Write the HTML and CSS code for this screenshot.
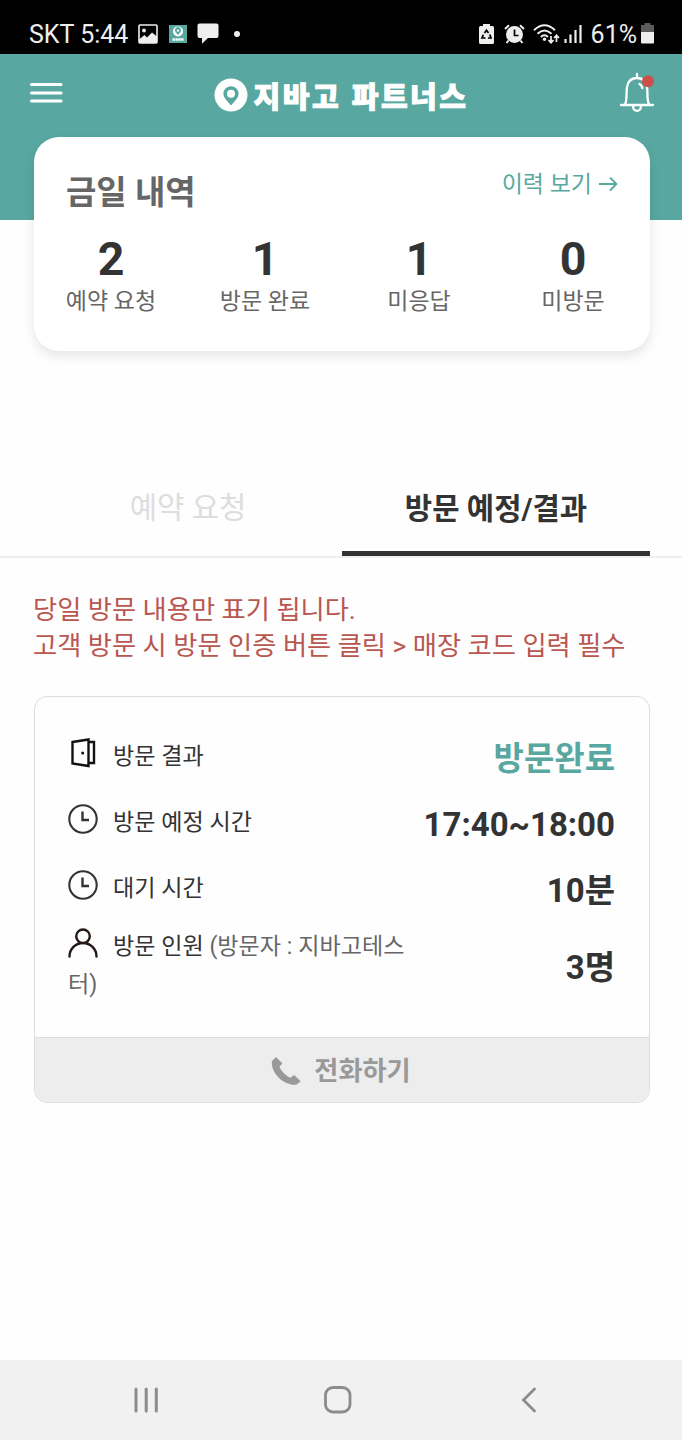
FILE: index.html
```html
<!DOCTYPE html>
<html lang="ko">

<head>
    <meta charset="UTF-8">
    <meta name="viewport" content="width=device-width, initial-scale=1.0">
    <link rel="stylesheet" href="styles.css">
    <title>지바고 파트너스</title>
</head>

<body>
    <div class="status-bar">
        <div class="status-left">
            <span class="status-text">SKT 5:44</span>
            <svg class="status-photo" width="20" height="20" viewBox="0 0 20 20">
                <rect x="1" y="1" width="18" height="18" rx="1" fill="none" stroke="#eee" stroke-width="1.6" />
                <circle cx="6" cy="6.5" r="1.9" fill="#eee" />
                <path d="M1 15.5L6.5 11L9 13.5L14 8.5L19 12.5V19H1z" fill="#eee" />
            </svg>
            <svg class="status-app" width="18" height="18" viewBox="0 0 18 18">
                <rect width="18" height="18" fill="#58a8a1" />
                <circle cx="9" cy="6.4" r="5" fill="#fff" />
                <path d="M9 10L6.7 7.2A3 3 0 1 1 11.3 7.2z" fill="#58a8a1" />
                <circle cx="9" cy="5.6" r="1.2" fill="#fff" />
                <path d="M3.5 14.5H14.5" stroke="#fff" stroke-width="2.5" stroke-dasharray="2.4 0.5" />
            </svg>
            <svg class="status-chat" width="22" height="21" viewBox="0 0 22 21">
                <path d="M2.5 0.5h17a2 2 0 0 1 2 2V13a2 2 0 0 1-2 2H11L5 20.8V15H2.5a2 2 0 0 1-2-2V2.5a2 2 0 0 1 2-2z" fill="#eee" />
            </svg>
            <span class="status-dot"></span>
        </div>
        <div class="status-right">
            <svg class="status-saver" width="15" height="20" viewBox="0 0 15 20">
                <path d="M4 0h7v2h2.5a1.5 1.5 0 0 1 1.5 1.5v15a1.5 1.5 0 0 1-1.5 1.5h-12A1.5 1.5 0 0 1 0 18.5v-15A1.5 1.5 0 0 1 1.5 2H4z" fill="#eee" />
                <path d="M5.5 9L7.5 6.2L9.5 9M10.8 10.5L12 14H9M6.5 14H3L4.3 10.8" fill="none" stroke="#000" stroke-width="1.7" />
            </svg>
            <svg class="status-alarm" width="21" height="20" viewBox="0 0 21 20">
                <circle cx="10.5" cy="10.5" r="8.5" fill="#eee" />
                <path d="M1 5L5 1.2M20 5L16 1.2M4.5 16.5L2.5 19M16.5 16.5L18.5 19" stroke="#eee" stroke-width="2" />
                <path d="M10.5 5.5V11.5H14.5" fill="none" stroke="#000" stroke-width="1.7" />
            </svg>
            <svg class="status-wifi" width="27" height="20" viewBox="0 0 27 20">
                <path d="M1 6.2Q11.5 -3.5 22 6.2M4.5 9.8Q11.5 3 18.5 9.8M7.8 13Q11.5 9.5 15 13" fill="none" stroke="#eee" stroke-width="1.9" />
                <circle cx="11.5" cy="15.3" r="1.7" fill="#eee" />
                <path d="M18 12V18.5M15.5 16L18 18.8L20.5 16M23.5 18V11.5M21 14L23.5 11.2L26 14" fill="none" stroke="#eee" stroke-width="1.7" />
            </svg>
            <svg class="status-signal" width="18" height="20" viewBox="0 0 18 20">
                <path d="M1.5 15V19M6.5 10.5V19M11.5 6V19M16.5 1V19" stroke="#eee" stroke-width="2.2" />
            </svg>
            <span class="status-text">61%</span>
            <svg class="status-battery" width="13" height="21" viewBox="0 0 13 21">
                <path d="M3.5 0h6v2H13V9H0V2h3.5z" fill="#5c5c5c" />
                <path d="M0 9h13v10.5a1 1 0 0 1-1 1H1a1 1 0 0 1-1-1z" fill="#eee" />
            </svg>
        </div>
    </div>

    <header class="header">
        <svg class="menu-icon" width="34" height="22" viewBox="0 0 34 22">
            <path d="M2.5 2.5H32M2.5 11H32M2.5 19H32" stroke="#fff" stroke-width="3" stroke-linecap="round" />
        </svg>
        <div class="logo">
            <svg width="34" height="34" viewBox="0 0 34 34">
                <circle cx="17" cy="17" r="16.5" fill="#fff" />
                <path d="M17 27.5L11.2 20.8A7.6 7.6 0 1 1 22.8 20.8z" fill="#58a8a1" />
                <circle cx="17" cy="15.8" r="4" fill="#fff" />
            </svg>
            <span class="logo-text">지바고 파트너스</span>
        </div>
        <svg class="bell-icon" width="36" height="41" viewBox="0 0 36 41">
            <path d="M18 2V5.5M2 33H34M6 32.5C8.5 27 7 20 8 15C9 9 12.5 6 18 6S27 9 28 15C29 20 27.5 27 30 32.5M14.2 33.5V35A3.8 3.8 0 0 0 21.8 35V33.5M20.5 12Q22.7 13 23.3 16" fill="none" stroke="#fff" stroke-width="2.3" stroke-linecap="round" />
            <circle cx="29" cy="9.3" r="6" fill="#cb5049" />
        </svg>
    </header>

    <section class="summary">
        <div class="summary-head">
            <h2 class="summary-title">금일 내역</h2>
            <a class="history-link">이력 보기
                <svg width="20" height="16" viewBox="0 0 20 16">
                    <path d="M1 7H18.5M12 0.5L18.5 7L12 13.5" fill="none" stroke="#58a8a1" stroke-width="1.8" />
                </svg>
            </a>
        </div>
        <div class="counts">
            <div class="count"><strong>2</strong><span>예약 요청</span></div>
            <div class="count"><strong>1</strong><span>방문 완료</span></div>
            <div class="count"><strong>1</strong><span>미응답</span></div>
            <div class="count"><strong>0</strong><span>미방문</span></div>
        </div>
    </section>

    <nav class="tabs">
        <div class="tab">예약 요청</div>
        <div class="tab tab-active">방문 예정/결과</div>
    </nav>

    <p class="notice">당일 방문 내용만 표기 됩니다.<br>고객 방문 시 방문 인증 버튼 클릭 &gt; 매장 코드 입력 필수</p>

    <section class="visit">
        <div class="visit-body">
            <div class="row">
                <div class="label">
                    <svg class="icon" width="30" height="30" viewBox="0 0 30 30">
                        <path d="M4.5 4L20.5 1.5V28L4.5 25.5zM20.5 4H26V25H20.5" fill="none" stroke="#111" stroke-width="2.4" />
                        <circle cx="14.7" cy="15" r="1.5" fill="#111" />
                    </svg>방문 결과
                </div>
                <div class="value value-done">방문완료</div>
            </div>
            <div class="row">
                <div class="label">
                    <svg class="icon" width="30" height="30" viewBox="0 0 30 30">
                        <circle cx="15" cy="15" r="13.7" fill="none" stroke="#333" stroke-width="2.1" />
                        <path d="M14.5 7.5V16H21" fill="none" stroke="#333" stroke-width="2.4" />
                    </svg>방문 예정 시간
                </div>
                <div class="value">17:40~18:00</div>
            </div>
            <div class="row">
                <div class="label">
                    <svg class="icon" width="30" height="30" viewBox="0 0 30 30">
                        <circle cx="15" cy="15" r="13.7" fill="none" stroke="#333" stroke-width="2.1" />
                        <path d="M14.5 7.5V16H21" fill="none" stroke="#333" stroke-width="2.4" />
                    </svg>대기 시간
                </div>
                <div class="value">10분</div>
            </div>
            <div class="row row-people">
                <div class="label">
                    <svg class="icon" width="30" height="30" viewBox="0 0 30 30">
                        <circle cx="15" cy="8.3" r="6.8" fill="none" stroke="#231815" stroke-width="2.4" />
                        <path d="M1.5 28.5A13.5 13.5 0 0 1 28.5 28.5" fill="none" stroke="#231815" stroke-width="2.4" stroke-linecap="round" />
                    </svg>방문 인원 <span class="visitor">(방문자 : 지바고테스<br>터)</span>
                </div>
                <div class="value">3명</div>
            </div>
        </div>
        <div class="call">
            <svg width="30" height="30" viewBox="0 0 30 30">
                <path d="M1.5 4.5L5 1L11.5 7.5L8.5 10.5C10 15 15 20 19.5 21.8L23 19L29.5 25C27 28.5 24 29.5 20 28.5C10 26 2.5 18 1 9.5C0.7 7.5 0.7 6 1.5 4.5z" fill="#999" />
            </svg>
            <span class="call-text">전화하기</span>
        </div>
    </section>

    <footer class="nav-bar">
        <svg width="24" height="26" viewBox="0 0 24 26">
            <path d="M2 2V24M12.2 2V24M22.3 2V24" stroke="#8c8c8c" stroke-width="3" stroke-linecap="round" />
        </svg>
        <svg class="nav-home" width="28" height="28" viewBox="0 0 28 28">
            <rect x="1.5" y="1.5" width="24.5" height="24.5" rx="7.5" fill="none" stroke="#8c8c8c" stroke-width="2.8" />
        </svg>
        <svg width="16" height="26" viewBox="0 0 16 26">
            <path d="M13.5 2L2.5 13L13.5 24" fill="none" stroke="#8c8c8c" stroke-width="2.8" stroke-linecap="round" />
        </svg>
    </footer>
</body>

</html>
```

FILE: styles.css
```css
* {
    box-sizing: border-box;
}

body {
    margin: 0;
    height: 1440px;
    display: flex;
    flex-direction: column;
    background: #fefefe;
    color: #333;
    font-family: Roboto, "Noto Sans CJK KR", sans-serif;
}

svg {
    flex: none;
}

.status-bar {
    height: 54px;
    padding: 13px 28px 0 29px;
    display: flex;
    justify-content: space-between;
    background: #000;
}

.status-left,
.status-right {
    height: 41px;
    display: flex;
    align-items: center;
}

.status-text {
    color: #eee;
    font-size: 25px;
    line-height: 40px;
    padding-top: 2px;
}

.status-photo {
    margin-left: 10px;
}

.status-app {
    margin-left: 11px;
}

.status-chat {
    margin-left: 10px;
}

.status-dot {
    width: 6px;
    height: 6px;
    margin-left: 15px;
    border-radius: 50%;
    background: #eee;
}

.status-alarm {
    margin-left: 10px;
}

.status-wifi {
    margin-left: 8px;
}

.status-signal {
    margin: 0 9px 0 4px;
}

.status-battery {
    margin-left: 4px;
}

.header {
    height: 166px;
    flex: none;
    padding: 17px 27px 0 29px;
    display: flex;
    justify-content: space-between;
    align-items: flex-start;
    background: #58a8a1;
}

.menu-icon {
    margin-top: 11px;
}

.logo {
    display: flex;
    align-items: center;
    gap: 6px;
    margin-top: 7px;
}

.logo-text {
    color: #fff;
    font-family: "Noto Sans CJK KR", sans-serif;
    font-size: 29px;
    font-weight: 900;
    line-height: 34px;
    letter-spacing: 2.5px;
    white-space: nowrap;
    -webkit-text-stroke: 1px #fff;
}

.bell-icon {
    margin-top: 1px;
}

.summary {
    height: 214px;
    flex: none;
    margin: -83px 32px 0 34px;
    padding: 31px 32px 0;
    border-radius: 25px;
    background: #fff;
    box-shadow: 0 5px 12px rgba(0, 0, 0, 0.1);
}

.summary-head {
    height: 67px;
    display: flex;
    justify-content: space-between;
    align-items: flex-start;
}

.summary-title {
    margin: 2px 0 0;
    color: #666;
    font-size: 33px;
    line-height: 46px;
}

.history-link {
    display: flex;
    align-items: center;
    gap: 6px;
    color: #58a8a1;
    font-size: 23px;
    line-height: 34px;
}

.counts {
    display: flex;
    justify-content: space-between;
}

.count {
    width: 90px;
    display: flex;
    flex-direction: column;
    align-items: center;
    white-space: nowrap;
}

.count strong {
    font-size: 46.5px;
    line-height: 48px;
}

.count span {
    color: #666;
    font-size: 23px;
    line-height: 38px;
}

.tabs {
    height: 94px;
    flex: none;
    margin-top: 113px;
    padding: 0 32px 0 34px;
    display: flex;
    border-bottom: 2px solid #efefef;
}

.tab {
    flex: 1;
    color: #ddd;
    font-size: 29.7px;
    line-height: 87px;
    text-align: center;
}

.tab-active {
    border-bottom: 5px solid #333;
    color: #333;
    font-weight: bold;
    line-height: 89px;
}

.notice {
    margin: 34px 0 0 33px;
    color: #b9564f;
    font-size: 26.25px;
    line-height: 36px;
    white-space: nowrap;
}

.visit {
    height: 407px;
    flex: none;
    margin: 32px 32px 0 34px;
    border: 1px solid #ddd;
    border-radius: 13px;
    overflow: hidden;
}

.visit-body {
    height: 340px;
    padding: 27px 34px 0 33px;
}

.row {
    height: 66px;
    display: flex;
    justify-content: space-between;
    align-items: center;
}

.row-people {
    height: 88px;
}

.label {
    font-size: 23.1px;
    line-height: 38px;
    white-space: nowrap;
}

.icon {
    margin-right: 15px;
    vertical-align: -4px;
}

.visitor {
    color: #666;
}

.value {
    padding-top: 3px;
    font-size: 33px;
    font-weight: bold;
    line-height: 46px;
}

.value-done {
    color: #58a8a1;
}

.call {
    height: 65px;
    padding: 1px 2px 0 0;
    display: flex;
    justify-content: center;
    align-items: center;
    gap: 13px;
    border-top: 1px solid #ddd;
    background: #ededed;
    color: #999;
    font-size: 26.2px;
    font-weight: bold;
}

.call-text {
    line-height: 36px;
}

.nav-bar {
    height: 80px;
    margin-top: auto;
    padding: 0 145px 1px 134px;
    display: flex;
    justify-content: space-between;
    align-items: center;
    background: #f1f1f1;
}

.nav-home {
    margin-right: 4px;
}
```
